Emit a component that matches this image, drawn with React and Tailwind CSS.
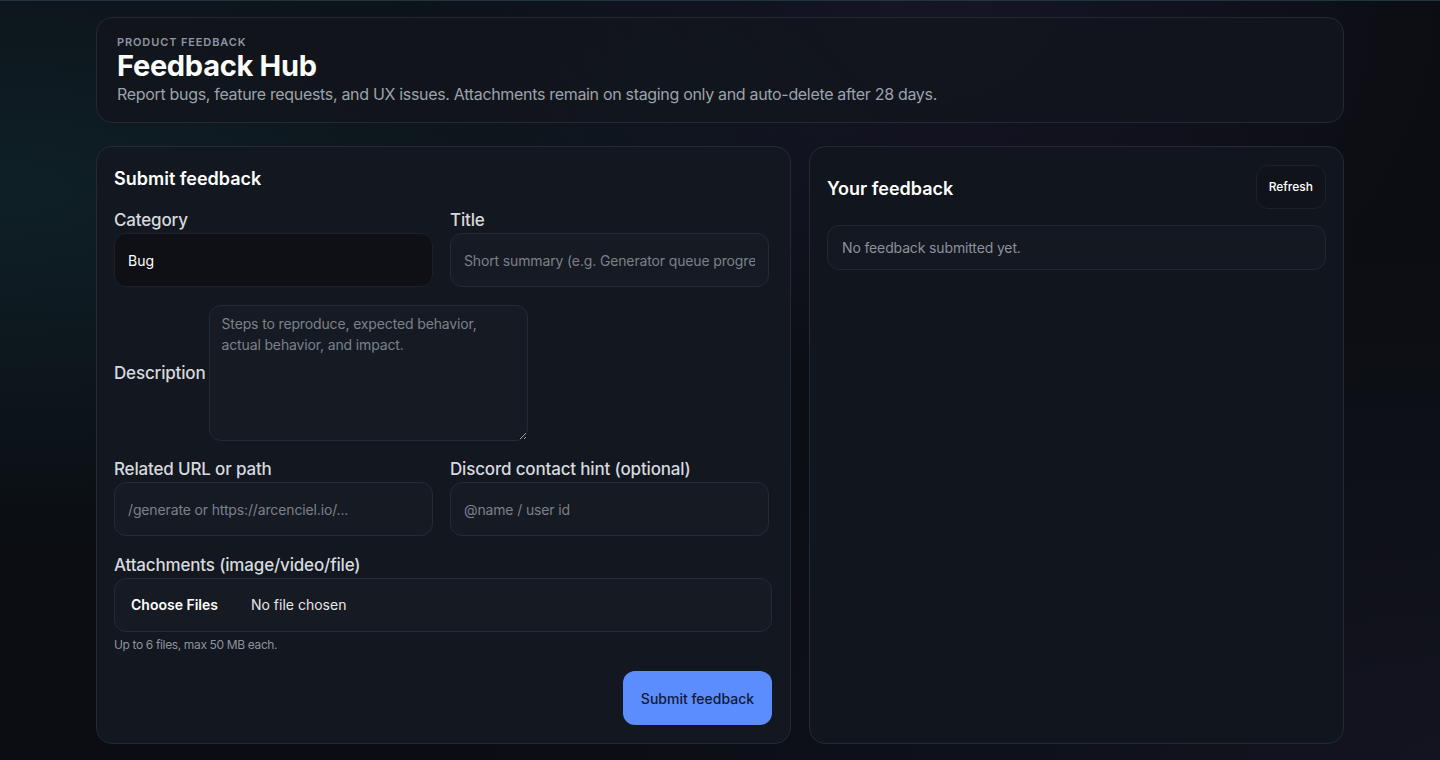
import { useState } from "react";

const inputCls =
  "w-full h-[54px] rounded-xl border border-[#252a34] bg-[#161a22] px-[13px] text-[14px] text-gray-100 placeholder:text-[#7b818c] outline-none tracking-[-0.01em]";

const Label = ({ children, className = "" }) => (
  <label className={`block text-[17px] leading-6 font-medium tracking-[-0.01em] text-[#d6d9df] ${className}`}>
    {children}
  </label>
);

const App = () => {
  const [category, setCategory] = useState("bug");

  return (
    <div
      className="min-h-screen border-t border-[#1d3540] bg-[#0b0d12] bg-[radial-gradient(ellipse_at_0%_25%,rgba(22,72,82,0.32),transparent_45%),radial-gradient(ellipse_at_65%_0%,rgba(70,60,130,0.18),transparent_40%),radial-gradient(ellipse_at_100%_100%,rgba(40,40,70,0.25),transparent_50%)] pb-4"
      style={{ fontFamily: "Inter, 'Noto Sans', sans-serif" }}
    >
      <div className="mx-auto w-[1248px] pt-4">
        {/* Header */}
        <div className="rounded-2xl border border-[#232833] bg-[#12151c]/90 px-5 py-4">
          <p className="text-[11px] leading-4 font-semibold uppercase tracking-[0.08em] text-[#8f95a0]">
            Product feedback
          </p>
          <h1 className="text-[29px] leading-8 font-bold tracking-[-0.01em] text-white">
            Feedback Hub
          </h1>
          <p className="text-[16px] leading-6 text-[#9ca2ad] tracking-[-0.02em]">
            Report bugs, feature requests, and UX issues. Attachments remain on staging only and auto-delete after 28 days.
          </p>
        </div>

        <div className="mt-[23px] grid grid-cols-[695px_535px] gap-[18px]">
          {/* Submit form */}
          <div className="h-[598px] rounded-2xl border border-[#242934] bg-[#141821]/95 px-[17px] pt-[18px]">
            <h2 className="text-[18px] leading-7 font-semibold text-white">Submit feedback</h2>

            <div className="mt-[15px] grid grid-cols-[319px_319px] gap-x-[17px]">
              <div>
                <Label>Category</Label>
                <select
                  value={category}
                  onChange={(e) => setCategory(e.target.value)}
                  className="mt-px h-[54px] w-full appearance-none rounded-xl border border-[#1c2028] bg-[#0e1015] px-[13px] text-[14px] text-white outline-none"
                >
                  <option value="bug">Bug</option>
                  <option value="feature">Feature request</option>
                  <option value="ux">UX issue</option>
                </select>
              </div>
              <div>
                <Label>Title</Label>
                <input
                  className={`${inputCls} mt-px`}
                  placeholder="Short summary (e.g. Generator queue progress stuck)"
                />
              </div>
            </div>

            <div className="mt-[18px] flex items-center gap-[3px]">
              <Label>Description</Label>
              <textarea
                className="h-[136px] w-[319px] rounded-xl border border-[#252a34] bg-[#161a22] px-3 py-[7px] text-[14px] leading-[21px] tracking-[-0.01em] text-gray-100 placeholder:text-[#7b818c] outline-none"
                placeholder="Steps to reproduce, expected behavior, actual behavior, and impact."
              />
            </div>

            <div className="mt-[16px] grid grid-cols-[319px_319px] gap-x-[17px]">
              <div>
                <Label>Related URL or path</Label>
                <input
                  className={`${inputCls} mt-px`}
                  placeholder="/generate or https://arcenciel.io/..."
                />
              </div>
              <div>
                <Label>Discord contact hint (optional)</Label>
                <input className={`${inputCls} mt-px`} placeholder="@name / user id" />
              </div>
            </div>

            <div className="mt-[17px]">
              <Label>Attachments (image/video/file)</Label>
              <input
                type="file"
                multiple
                className="mt-px h-[54px] w-[658px] rounded-xl border border-[#252a34] bg-[#161a22] px-4 text-[14px] text-[#e5e7eb] file:mr-[33px] file:h-[50px] file:border-0 file:bg-transparent file:font-semibold file:text-[14px] file:text-white"
              />
              <p className="mt-[5px] text-[12px] leading-4 tracking-[-0.03em] text-[#8d939d]">
                Up to 6 files, max 50 MB each.
              </p>
            </div>

            <div className="mt-[18px] flex justify-end pr-px">
              <button className="h-[54px] w-[149px] rounded-xl bg-[#5b8dff] text-[14px] font-medium text-[#121a33]">
                Submit feedback
              </button>
            </div>
          </div>

          {/* List */}
          <div className="h-[598px] rounded-2xl border border-[#242934] bg-[#12161e]/95 px-[17px] pt-[18px]">
            <div className="flex h-[44px] items-center justify-between">
              <h2 className="mt-[3px] text-[18px] leading-7 font-semibold text-white">Your feedback</h2>
              <button className="h-[44px] rounded-xl border border-[#1d212a] bg-[#10131a] px-3 text-[12px] font-medium text-white">
                Refresh
              </button>
            </div>
            <div className="mt-4 flex h-[45px] items-center rounded-xl border border-[#222732] bg-[#141821] px-[14px] text-[14px] tracking-[-0.01em] text-[#8b919b]">
              No feedback submitted yet.
            </div>
          </div>
        </div>
      </div>
    </div>
  );
};

export default App;
